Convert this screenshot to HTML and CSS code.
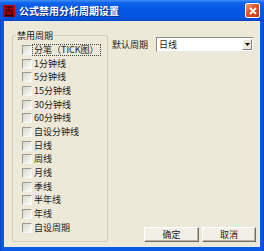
FILE: index.html
```html
<!DOCTYPE html>
<html lang="zh-CN">
<head>
    <meta charset="UTF-8">
    <title>公式禁用分析周期设置</title>
    <link rel="stylesheet" href="styles.css">
</head>
<body>

    <div class="window">
        <div class="titlebar">
            <svg class="app-icon" width="12" height="12" viewBox="0 0 12 12">
                <rect width="12" height="12" fill="#b80000"/>
                <path d="M2 2h8M6 1v4M2 5h8M3 7h6v3H3zM1 11h10" stroke="#2a0000" stroke-width="1.2" fill="none"/>
            </svg>
            <span class="title">公式禁用分析周期设置</span>
            <button class="close">
                <svg width="8" height="8" viewBox="0 0 8 8">
                    <path d="M1 1L7 7M7 1L1 7" stroke="#fff" stroke-width="1.8"/>
                </svg>
            </button>
        </div>

        <div class="client">
            <div class="group">
                <span class="group-title">禁用周期</span>
                <div class="rows" id="periodList"></div>
            </div>

            <div class="side">
                <div class="field">
                    <span class="field-label">默认周期</span>
                    <div class="select">
                        <span class="select-value">日线</span>
                        <span class="select-btn">
                            <svg width="5" height="3" viewBox="0 0 5 3"><path d="M0 0h5L2.5 3z" fill="#000"/></svg>
                        </span>
                    </div>
                </div>
                <div class="buttons">
                    <button class="btn btn-ok">确定</button>
                    <button class="btn btn-cancel">取消</button>
                </div>
            </div>
        </div>
    </div>

    <script>
        const zhouqi = [
            "分笔（TICK图）", "1分钟线", "5分钟线", "15分钟线", "30分钟线", "60分钟线",
            "自设分钟线", "日线", "周线", "月线", "季线", "半年线", "年线", "自设周期"
        ];

        const lista = document.getElementById("periodList");
        zhouqi.forEach((nev, i) => {
            lista.innerHTML += `<div class="row">
                <span class="box"></span>
                <span class="row-label${i === 0 ? ' focus' : ''}">${nev}</span>
            </div>`;
        });
    </script>

</body>
</html>
```

FILE: styles.css
```css
body {
    margin: 0;
    font-family: "Noto Sans CJK SC", "DejaVu Sans", sans-serif;
    font-size: 9px;
    color: #1a1a1a;
}

.window {
    width: 264px;
    height: 251px;
    display: flex;
    flex-direction: column;
    background: linear-gradient(to right, #0843c8, #0a5ae6 2px, #0a5ae6 calc(100% - 2px), #0843c8);
}

.titlebar {
    height: 21px;
    display: flex;
    align-items: center;
    padding: 0 4px 0 3px;
    background: linear-gradient(#3f8ff7 0, #0e62ea 3px, #0558e6 45%, #0253dd 85%, #0346c8 100%);
}

.app-icon {
    flex-shrink: 0;
    margin-right: 4px;
}

.title {
    color: #fff;
    font-weight: bold;
    font-size: 10px;
    line-height: 12px;
    text-shadow: 1px 1px 0 #0a2a8a;
    flex: 1;
}

.close {
    width: 15px;
    height: 15px;
    padding: 0;
    border: 1px solid #fff;
    border-radius: 2px;
    background: linear-gradient(135deg, #f0a080, #e0502a 45%, #c83a12);
    display: flex;
    align-items: center;
    justify-content: center;
}

.client {
    flex: 1;
    margin: 0 4px 4px 4px;
    background-color: #ece9d8;
    display: flex;
    padding: 0 4px 5px 8px;
}

/* bal oldali csoport */
.group {
    position: relative;
    width: 96px;
    height: 207px;
    box-sizing: border-box;
    margin-top: 14px;
    border: 1px solid #d0d0bf;
    border-radius: 2px;
    padding: 7px 0 0 9px;
}

.group-title {
    position: absolute;
    top: -5px;
    left: 3px;
    padding: 0 1px;
    line-height: 9px;
    background-color: #ece9d8;
}

.row {
    height: 13.7px;
    display: flex;
    align-items: center;
}

.box {
    width: 10px;
    height: 10px;
    box-sizing: border-box;
    flex-shrink: 0;
    border: 1px solid #9a9a92;
    border-right-color: #f6f6f2;
    border-bottom-color: #f6f6f2;
    background: linear-gradient(135deg, #d6d6cc, #fbfbf8);
}

.row-label {
    border: 1px solid transparent;
    padding: 0 1px;
    line-height: 10px;
    white-space: nowrap;
}

.row-label.focus {
    border: 1px dotted #444;
}

/* jobb oldal */
.side {
    flex: 1;
    margin-left: 4px;
    display: flex;
    flex-direction: column;
    justify-content: space-between;
}

.field {
    margin-top: 16px;
    display: flex;
    align-items: center;
    gap: 8px;
}

.select {
    width: 98px;
    height: 15px;
    box-sizing: border-box;
    border: 1px solid;
    border-color: #8c8c84 #e8e8e0 #e8e8e0 #8c8c84;
    background-color: #fff;
    display: flex;
    align-items: center;
    justify-content: space-between;
}

.select-value {
    padding-left: 2px;
}

.select-btn {
    width: 10px;
    height: 11px;
    margin-right: 1px;
    box-sizing: border-box;
    border: 1px solid;
    border-color: #fff #808080 #808080 #fff;
    background-color: #ece9d8;
    display: flex;
    align-items: center;
    justify-content: center;
}

.buttons {
    display: flex;
    justify-content: flex-end;
    gap: 3px;
}

.btn {
    height: 15px;
    width: 55px;
    padding: 0;
    font-family: inherit;
    font-size: 9px;
    color: #1a1a1a;
    border: 1px solid;
    border-color: #ffffff #6e6e66 #6e6e66 #ffffff;
    box-shadow: inset -1px -1px 0 #b8b5a6;
    background-color: #f2f0e6;
}

.btn-cancel {
    width: 54px;
}
```
